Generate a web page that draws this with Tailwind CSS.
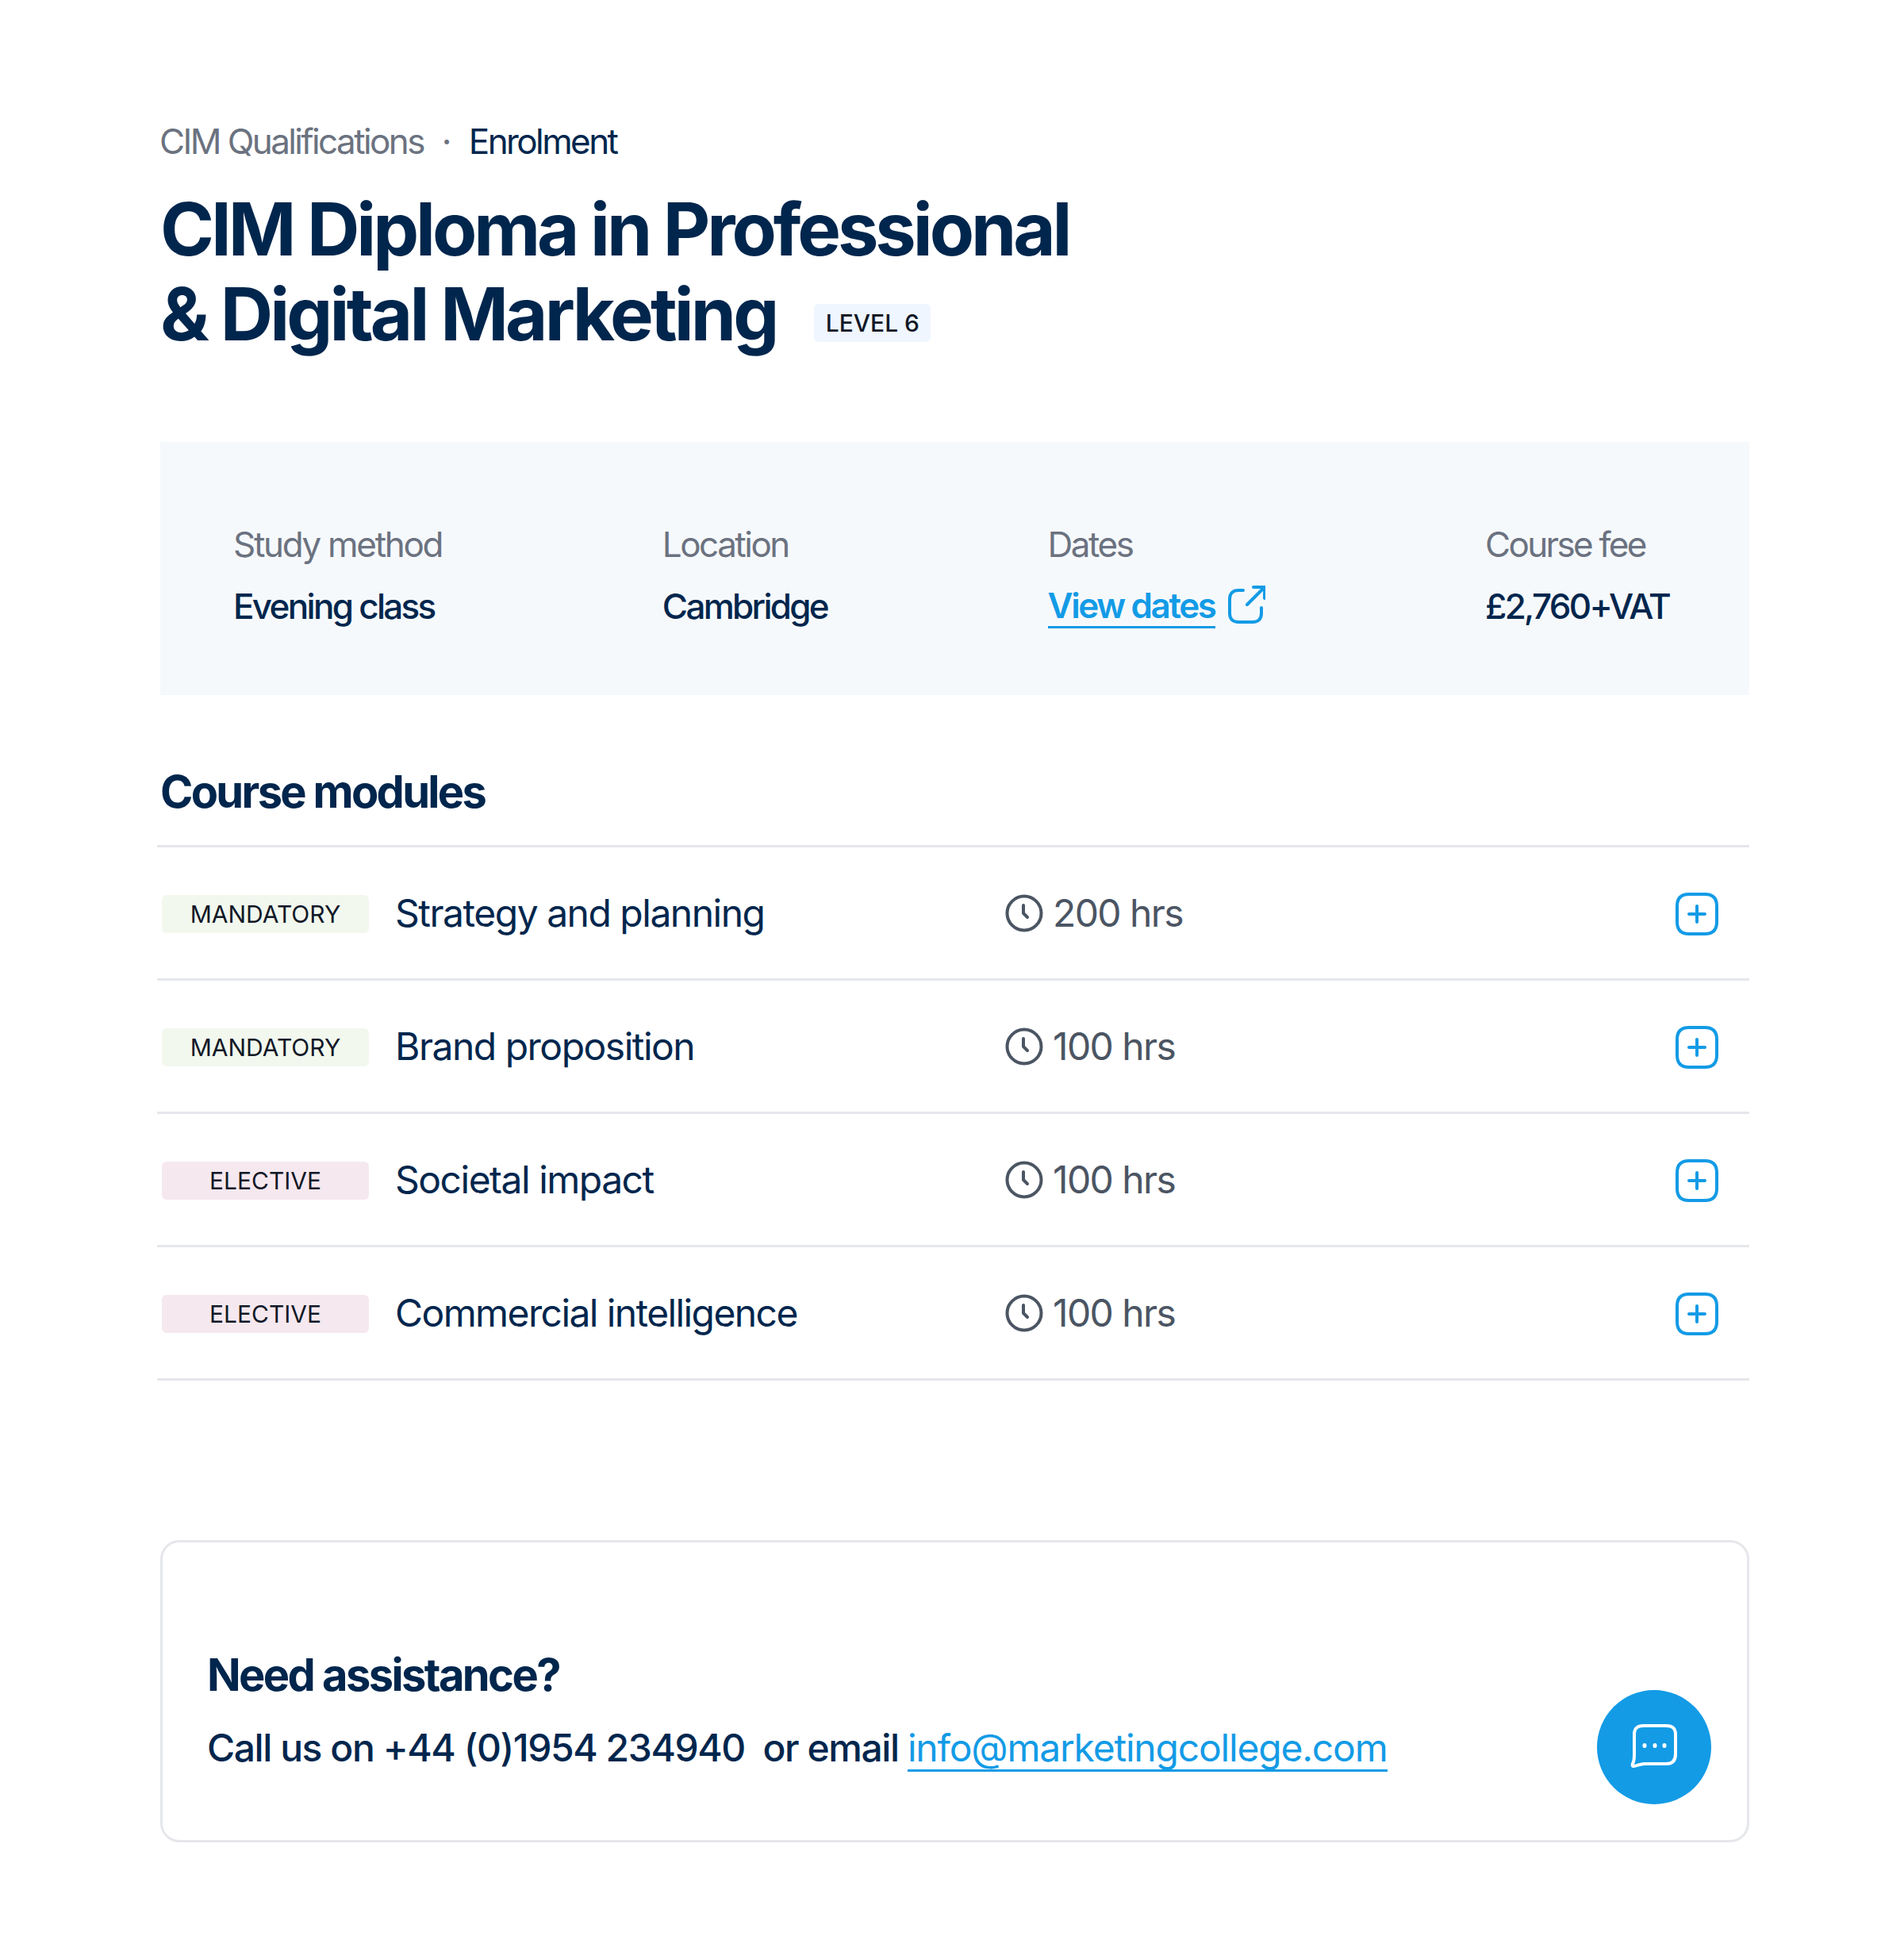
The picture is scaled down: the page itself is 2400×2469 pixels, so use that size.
<!DOCTYPE html>
<html lang="en"><head><meta charset="utf-8"><title>Enrolment</title>
<script src="https://cdn.jsdelivr.net/npm/@tailwindcss/browser@4"></script></head>
<body class="bg-white font-['Inter',sans-serif] text-[#00264d]">
<main class="w-[2400px] h-[2469px] pl-[202px] pr-[195px] pt-[150px]">
  <nav class="flex items-center h-[56px] -ml-[1px] text-[44px] leading-[56px] tracking-[-2.6px]">
    <span class="text-[#6b7280]">CIM Qualifications</span>
    <span class="text-[#6b7280] w-[58px] text-center -ml-[1px]">·</span>
    <span>Enrolment</span>
  </nav>
  <h1 class="mt-[29px] text-[92px] leading-[107px] font-bold tracking-[-4.1px]">CIM Diploma in Professional<br><span class="tracking-[-3.9px]">&amp; Digital Marketing</span><span class="inline-flex align-middle items-center justify-center ml-[48px] w-[147px] h-[48px] rounded-[6px] bg-[#eff6ff] text-[#111827] text-[30px] leading-[48px] font-medium tracking-normal relative top-[3px]">LEVEL 6</span></h1>

  <section class="mt-[108px] h-[319px] bg-[#f6f9fc] pl-[92px] pr-[101px] flex justify-between items-start pt-[103px]">
    <div><p class="text-[#6b7280] text-[44px] leading-[52px] tracking-[-2.3px]">Study method</p><p class="mt-[26px] text-[44px] leading-[52px] font-medium tracking-[-2.7px]">Evening class</p></div>
    <div><p class="text-[#6b7280] text-[44px] leading-[52px] tracking-[-2.5px]">Location</p><p class="mt-[26px] text-[44px] leading-[52px] font-medium tracking-[-2.7px]">Cambridge</p></div>
    <div><p class="text-[#6b7280] text-[44px] leading-[52px] tracking-[-2.5px]">Dates</p>
      <p class="mt-[26px] flex items-center gap-[15px] text-[44px] leading-[52px] font-semibold tracking-[-2.4px] text-[#139be6]"><a class="inline-block leading-[51px] border-b-[3px] border-[#139be6]">View dates</a>
        <svg class="w-[48px] h-[48px] -mt-[6px]" viewBox="0 0 48 48" fill="none" stroke="#139be6" stroke-width="4" stroke-linecap="round" stroke-linejoin="round"><path d="M20 6H14C7 6 3 10 3 17V35C3 42 7 46 14 46H32C39 46 43 42 43 35V28"/><path d="M25 24L46 3M33 2H47V16"/></svg></p></div>
    <div><p class="text-[#6b7280] text-[44px] leading-[52px] tracking-[-2.7px]">Course fee</p><p class="mt-[26px] text-[44px] leading-[52px] font-medium tracking-[-2.7px]">£2,760+VAT</p></div>
  </section>

  <h2 class="mt-[92px] text-[56px] leading-[60px] font-bold tracking-[-2.7px]">Course modules</h2>

  <ul class="mt-[37px] -ml-[4px] border-t-[3px] border-[#e5e7eb]">
    <li class="h-[168px] border-b-[3px] border-[#e5e7eb] flex items-center">
      <span class="ml-[6px] mt-[2px] w-[261px] h-[48px] rounded-[6px] bg-[#f2f8ee] text-[#111827] text-[30px] leading-[48px] text-center">MANDATORY</span>
      <span class="ml-[33px] w-[769px] text-[48px] leading-[60px] tracking-[-1.5px]">Strategy and planning</span>
      <svg class="w-[48px] h-[48px]" viewBox="0 0 48 48" fill="none" stroke="#4b5563" stroke-width="4" stroke-linecap="round" stroke-linejoin="round"><circle cx="24" cy="24" r="21.5"/><path d="M23 14V24L28 29"/></svg>
      <span class="ml-[12px] text-[#4b5563] text-[48px] leading-[60px] tracking-[-1.6px]">200 hrs</span>
      <svg class="w-[56px] h-[56px] ml-auto mr-[38px] mt-[2px]" viewBox="0 0 56 56" fill="none" stroke="#139be6" stroke-width="4" stroke-linecap="round" stroke-linejoin="round"><path d="M18 3H38C48 3 53 8 53 18V38C53 48 48 53 38 53H18C8 53 3 48 3 38V18C3 8 8 3 18 3Z"/><path d="M28 18V38M18 28H38"/></svg>
    </li>
    <li class="h-[168px] border-b-[3px] border-[#e5e7eb] flex items-center">
      <span class="ml-[6px] mt-[2px] w-[261px] h-[48px] rounded-[6px] bg-[#f2f8ee] text-[#111827] text-[30px] leading-[48px] text-center">MANDATORY</span>
      <span class="ml-[33px] w-[769px] text-[48px] leading-[60px] tracking-[-1.5px]">Brand proposition</span>
      <svg class="w-[48px] h-[48px]" viewBox="0 0 48 48" fill="none" stroke="#4b5563" stroke-width="4" stroke-linecap="round" stroke-linejoin="round"><circle cx="24" cy="24" r="21.5"/><path d="M23 14V24L28 29"/></svg>
      <span class="ml-[12px] text-[#4b5563] text-[48px] leading-[60px] tracking-[-1.6px]">100 hrs</span>
      <svg class="w-[56px] h-[56px] ml-auto mr-[38px] mt-[2px]" viewBox="0 0 56 56" fill="none" stroke="#139be6" stroke-width="4" stroke-linecap="round" stroke-linejoin="round"><path d="M18 3H38C48 3 53 8 53 18V38C53 48 48 53 38 53H18C8 53 3 48 3 38V18C3 8 8 3 18 3Z"/><path d="M28 18V38M18 28H38"/></svg>
    </li>
    <li class="h-[168px] border-b-[3px] border-[#e5e7eb] flex items-center">
      <span class="ml-[6px] mt-[2px] w-[261px] h-[48px] rounded-[6px] bg-[#f6e8ef] text-[#111827] text-[30px] leading-[48px] text-center">ELECTIVE</span>
      <span class="ml-[33px] w-[769px] text-[48px] leading-[60px] tracking-[-1.5px]">Societal impact</span>
      <svg class="w-[48px] h-[48px]" viewBox="0 0 48 48" fill="none" stroke="#4b5563" stroke-width="4" stroke-linecap="round" stroke-linejoin="round"><circle cx="24" cy="24" r="21.5"/><path d="M23 14V24L28 29"/></svg>
      <span class="ml-[12px] text-[#4b5563] text-[48px] leading-[60px] tracking-[-1.6px]">100 hrs</span>
      <svg class="w-[56px] h-[56px] ml-auto mr-[38px] mt-[2px]" viewBox="0 0 56 56" fill="none" stroke="#139be6" stroke-width="4" stroke-linecap="round" stroke-linejoin="round"><path d="M18 3H38C48 3 53 8 53 18V38C53 48 48 53 38 53H18C8 53 3 48 3 38V18C3 8 8 3 18 3Z"/><path d="M28 18V38M18 28H38"/></svg>
    </li>
    <li class="h-[168px] border-b-[3px] border-[#e5e7eb] flex items-center">
      <span class="ml-[6px] mt-[2px] w-[261px] h-[48px] rounded-[6px] bg-[#f6e8ef] text-[#111827] text-[30px] leading-[48px] text-center">ELECTIVE</span>
      <span class="ml-[33px] w-[769px] text-[48px] leading-[60px] tracking-[-1.6px]">Commercial intelligence</span>
      <svg class="w-[48px] h-[48px]" viewBox="0 0 48 48" fill="none" stroke="#4b5563" stroke-width="4" stroke-linecap="round" stroke-linejoin="round"><circle cx="24" cy="24" r="21.5"/><path d="M23 14V24L28 29"/></svg>
      <span class="ml-[12px] text-[#4b5563] text-[48px] leading-[60px] tracking-[-1.6px]">100 hrs</span>
      <svg class="w-[56px] h-[56px] ml-auto mr-[38px] mt-[2px]" viewBox="0 0 56 56" fill="none" stroke="#139be6" stroke-width="4" stroke-linecap="round" stroke-linejoin="round"><path d="M18 3H38C48 3 53 8 53 18V38C53 48 48 53 38 53H18C8 53 3 48 3 38V18C3 8 8 3 18 3Z"/><path d="M28 18V38M18 28H38"/></svg>
    </li>
  </ul>

  <section class="mt-[201px] h-[381px] border-[3px] border-[#e5e7eb] rounded-[24px] pl-[56px] pr-[45px] pb-[45px] flex justify-between items-end">
    <div class="mb-[39px]">
      <h3 class="text-[56px] leading-[64px] font-bold tracking-[-2.6px]">Need assistance?</h3>
      <p class="mt-[28px] text-[48px] leading-[64px] font-medium tracking-[-1.45px]">Call us on +44 (0)1954 234940&nbsp; or email <a class="inline-block leading-[54px] font-normal tracking-[-1.2px] text-[#139be6] border-b-[3px] border-[#139be6]">info@marketingcollege.com</a></p>
    </div>
    <button class="w-[144px] h-[144px] rounded-full bg-[#139be6] flex items-center justify-center">
      <svg class="w-[60px] h-[60px]" viewBox="0 0 60 60" fill="none" stroke="#fff" stroke-width="4" stroke-linecap="round" stroke-linejoin="round"><path d="M17 3H45C53 3 57 6 57 14V39C57 47 53 51 45 51H18C12 51 8 54 4 54C3 54 2 53 3 51C5 47 5 44 5 40V14C5 6 9 3 17 3Z"/><path d="M18 27.5V28.5M31 27.5V28.5M43 27.5V28.5" stroke-width="5"/></svg>
    </button>
  </section>
</main>
</body></html>
